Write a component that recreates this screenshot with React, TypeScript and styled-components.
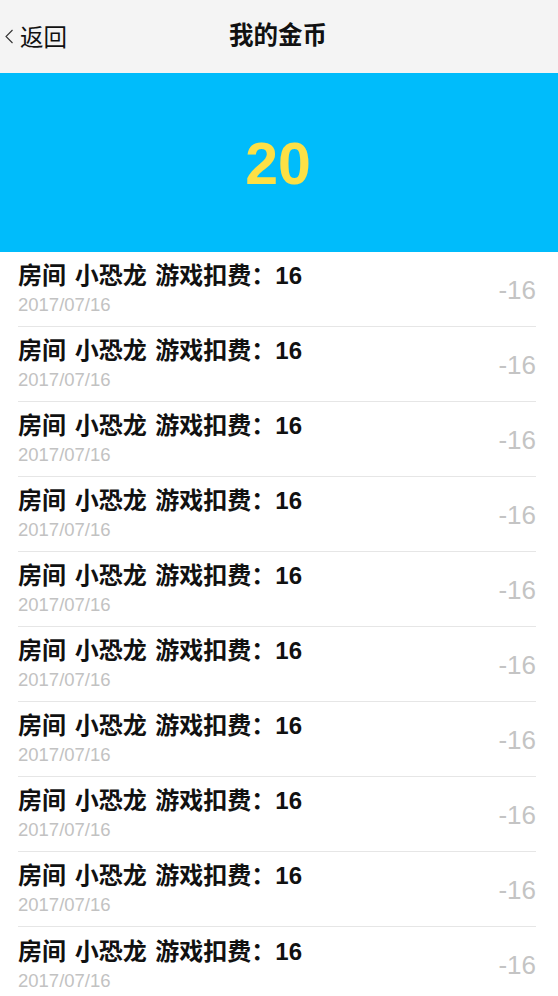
import React from "react";
import styled, { createGlobalStyle } from "styled-components";

const GlobalStyle = createGlobalStyle`
  html, body { margin: 0; padding: 0; background: #ffffff; }
  body { font-family: "Liberation Sans", "Noto Sans CJK SC", sans-serif; }
  * { box-sizing: border-box; }
`;

const Page = styled.div`
  width: 558px;
  min-height: 996px;
  background: #fff;
  display: flex;
  flex-direction: column;
`;

const NavBar = styled.header`
  height: 73px;
  background: #f4f4f4;
  display: grid;
  grid-template-columns: 1fr auto 1fr;
  align-items: center;
  padding: 0 4px;
`;

const Back = styled.div`
  display: flex;
  align-items: center;
  gap: 6px;
  font-size: 23.5px;
  color: #111;
  font-family: "Noto Sans CJK SC", sans-serif;
  padding-bottom: 1px;
`;

const NavTitle = styled.h1`
  margin: 0;
  font-size: 24.5px;
  font-weight: 700;
  color: #111;
  font-family: "Noto Sans CJK SC", sans-serif;
  padding-bottom: 6px;
  padding-right: 2px;
`;

const Banner = styled.section`
  height: 179px;
  background: #00bcfb;
  display: flex;
  align-items: center;
  justify-content: center;
`;

const Coins = styled.div`
  font-size: 59px;
  font-weight: 700;
  color: #fde045;
  font-family: "Liberation Sans", sans-serif;
  padding-top: 2px;
  padding-right: 2px;
`;

const List = styled.ul`
  list-style: none;
  margin: 0;
  padding: 0 22px 0 18px;
`;

const Row = styled.li`
  height: 75px;
  display: flex;
  align-items: center;
  justify-content: space-between;
  border-bottom: 1px solid #e6e6e6;
  &:last-child { border-bottom: none; }
`;

const Info = styled.div`
  display: flex;
  flex-direction: column;
`;

const Title = styled.div`
  font-size: 24px;
  font-weight: 700;
  color: #111;
  line-height: 28px;
  word-spacing: 2px;
  font-family: "Liberation Sans", "Noto Sans CJK SC", sans-serif;
`;

const Date = styled.div`
  font-size: 18.5px;
  color: #c2c2c2;
  line-height: 22px;
  margin-top: 4px;
  font-family: "Liberation Sans", sans-serif;
`;

const Amount = styled.div`
  font-size: 26px;
  color: #c4c4c4;
  font-weight: 300;
  font-family: "Liberation Sans", sans-serif;
  padding-top: 2px;
`;

const Chevron = () => (
  <svg width="10" height="15" viewBox="0 0 10 15">
    <path d="M8.5 1 L2 7.5 L8.5 14" fill="none" stroke="#333" strokeWidth="1.1" />
  </svg>
);

export default function App() {
  const rows = Array.from({ length: 10 });
  return (
    <>
      <GlobalStyle />
      <Page>
        <NavBar>
          <Back>
            <Chevron />
            <span>返回</span>
          </Back>
          <NavTitle>我的金币</NavTitle>
          <div />
        </NavBar>
        <Banner>
          <Coins>20</Coins>
        </Banner>
        <List>
          {rows.map((_, i) => (
            <Row key={i}>
              <Info>
                <Title>房间 小恐龙 游戏扣费：16</Title>
                <Date>2017/07/16</Date>
              </Info>
              <Amount>-16</Amount>
            </Row>
          ))}
        </List>
      </Page>
    </>
  );
}
